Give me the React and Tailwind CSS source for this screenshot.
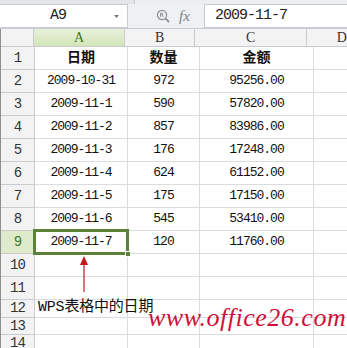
import React from "react";

const mono = { fontFamily: '"Liberation Mono", "Noto Sans CJK SC", monospace' };
const cjk = { fontFamily: '"Liberation Mono", "Noto Sans CJK SC", sans-serif' };

const data = [
  ["2009-10-31", "972", "95256.00"],
  ["2009-11-1", "590", "57820.00"],
  ["2009-11-2", "857", "83986.00"],
  ["2009-11-3", "176", "17248.00"],
  ["2009-11-4", "624", "61152.00"],
  ["2009-11-5", "175", "17150.00"],
  ["2009-11-6", "545", "53410.00"],
  ["2009-11-7", "120", "11760.00"],
];

function RowHead({ n, active, h }) {
  return (
    <div
      className={`w-[34px] shrink-0 flex items-center justify-center border-r border-b border-[#c9cbce] text-[14px] tracking-[-1px] ${
        active ? "bg-[#dfeacb] text-[#3d7a1c]" : "bg-[#f3f3f3] text-[#333]"
      } ${h}`}
      style={mono}
    >
      {n}
    </div>
  );
}

function Cell({ w, children, className = "" }) {
  return (
    <div
      className={`shrink-0 flex items-center justify-center border-r border-b border-[#dadcdf] ${w} ${className}`}
    >
      {children}
    </div>
  );
}

function Row({ n, h = "h-[23px]", active, cells, bold }) {
  return (
    <div className="flex">
      <RowHead n={n} active={active} h={h} />
      {cells.map((c, i) => (
        <Cell key={i} w={["w-[93px]", "w-[72px]", "w-[114px]"][i]} className={`${h} ${active && i === 0 ? "relative" : ""}`}>
          {c && (
            <span
              className={bold ? "text-[14px] font-bold text-[#111]" : "text-[13px] tracking-[-1px] text-[#111]"}
              style={bold ? cjk : mono}
            >
              {c}
            </span>
          )}
          {active && i === 0 && (
            <div className="absolute left-[-2px] top-[-2px] right-[-2px] bottom-[-2px] border-[3px] border-[#5b8237]">
              <div className="absolute right-[-5px] bottom-[-5px] w-[6px] h-[6px] bg-[#5b8237] border border-white" />
            </div>
          )}
        </Cell>
      ))}
      <div className={`flex-1 border-b border-[#dadcdf] ${h}`} />
    </div>
  );
}

export default function App() {
  return (
    <div className="relative w-[347px] h-[348px] overflow-hidden bg-white">
      {/* formula bar */}
      <div className="h-[29px] bg-[#eef0f3] border-b border-[#c9cdd2] flex flex-col">
        <div className="h-[4px] flex">
          <div className="w-[135px] bg-[#e3e5e8] border-r border-[#c9cdd2]" />
          <div className="flex-1 bg-[#eceef1]" />
        </div>
        <div className="flex items-center h-[24px]">
          <div className="w-[128px] h-[24px] bg-white border-y border-r border-[#c7cbd1] flex items-center relative">
            <span className="ml-[50px] text-[15px] tracking-[-1px] text-[#222]" style={mono}>
              A9
            </span>
            <svg className="absolute right-[8px] top-[10px]" width="5" height="3" viewBox="0 0 5 3">
              <path d="M0 0h5L2.5 3z" fill="#777" />
            </svg>
          </div>
          <div className="flex items-center w-[76px] h-[24px]">
            <svg className="ml-[28px]" width="14" height="14" viewBox="0 0 14 14">
              <circle cx="6" cy="6" r="4.6" fill="none" stroke="#8a8f96" strokeWidth="1.2" />
              <path d="M9.4 9.4L13 13" stroke="#8a8f96" strokeWidth="1.8" />
              <path d="M4.6 8V4.2h1.7c1 0 1 1.6 0 1.6H4.6M6 5.8L7.4 8" fill="none" stroke="#8a8f96" strokeWidth="0.9" />
            </svg>
            <span className="ml-[9px] text-[15px] italic text-[#7d8288]" style={{ fontFamily: '"Liberation Serif", serif' }}>
              fx
            </span>
          </div>
          <div className="flex-1 h-[24px] bg-white border-y border-l border-[#c7cbd1] flex items-center">
            <span className="ml-[10px] text-[15px] tracking-[-1px] text-[#222]" style={mono}>
              2009-11-7
            </span>
          </div>
        </div>
      </div>

      {/* sheet */}
      <div className="border-l border-[#8d8f93]">
        <div className="flex h-[18px] text-[14px] text-[#333]" style={{ fontFamily: '"Liberation Serif", serif' }}>
          <div className="w-[34px] border-r border-b border-[#c9cbce] bg-[#f3f3f3]" />
          <div className="w-[93px] border-r border-b border-[#c9cbce] bg-gradient-to-b from-[#e8f1da] to-[#d3e5b8] flex items-center justify-center text-[#3d7a1c]">
            A
          </div>
          <div className="w-[72px] border-r border-b border-[#c9cbce] bg-[#f3f3f3] flex items-center justify-center">B</div>
          <div className="w-[114px] border-r border-b border-[#c9cbce] bg-[#f3f3f3] flex items-center justify-center">C</div>
          <div className="flex-1 border-b border-[#c9cbce] bg-[#f3f3f3] pl-[30px] flex items-center">D</div>
        </div>
        <Row n="1" cells={["日期", "数量", "金额"]} bold />
        {data.map((r, i) => (
          <Row key={i} n={String(i + 2)} cells={r} active={i === 7} />
        ))}
        <Row n="10" cells={["", "", ""]} />
        <Row n="11" cells={["", "", ""]} />
        <div className="flex relative">
          <RowHead n="12" h="h-[18px]" />
          <div className="flex-1 h-[18px] flex border-b border-[#dadcdf]">
            <div className="w-[93px] border-r border-[#dadcdf]" />
            <div className="w-[72px] border-r border-[#dadcdf]" />
            <div className="w-[114px] border-r border-[#dadcdf]" />
          </div>
          <span className="absolute left-[37px] top-[-3px] text-[15px] text-[#111] tracking-[-0.2px]" style={cjk}>
            WPS表格中的日期
          </span>
        </div>
        <Row n="13" h="h-[17px]" cells={["", "", ""]} />
        <Row n="14" h="h-[17px]" cells={["", "", ""]} />
      </div>

      {/* arrow pointing at the selected cell */}
      <svg className="absolute left-[79px] top-[256px]" width="10" height="37" viewBox="0 0 10 37">
        <path d="M5 0L9 9H1z" fill="#c4141c" />
        <path d="M5 8V36" stroke="#c4141c" strokeWidth="1.2" />
      </svg>

      <span
        className="absolute left-[148px] top-[305px] text-[26px] italic text-[#cf1138] leading-none tracking-[0.5px]"
        style={{ fontFamily: '"Liberation Serif", serif' }}
      >
        www.office26.com
      </span>
    </div>
  );
}
